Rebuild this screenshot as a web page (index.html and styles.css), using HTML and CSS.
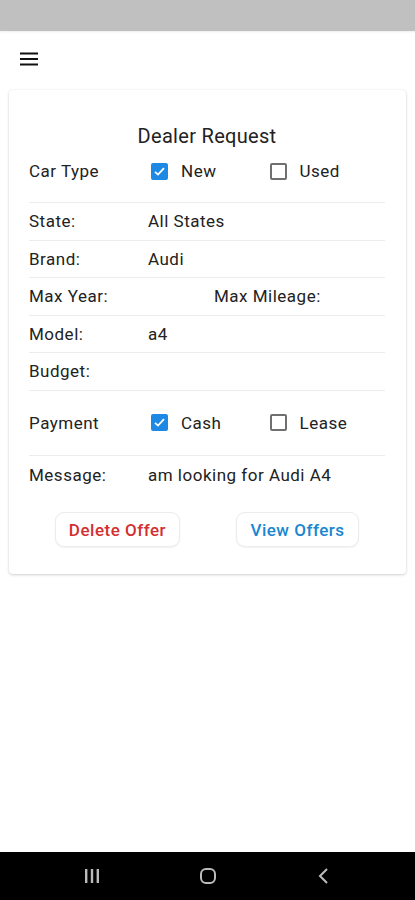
FILE: index.html
```html
<!DOCTYPE html>
<html lang="en">
<head>
    <meta charset="UTF-8">
    <meta name="viewport" content="width=device-width, initial-scale=1.0">
    <title>Dealer Request</title>
    <link rel="stylesheet" href="styles.css">
</head>
<body>

    <div class="status-bar"></div>

    <header class="app-bar">
        <svg class="menu-icon" width="18" height="14" viewBox="0 0 18 14">
            <rect x="0" y="0.5" width="18" height="2" fill="#111"/>
            <rect x="0" y="6" width="18" height="2" fill="#111"/>
            <rect x="0" y="11.5" width="18" height="2" fill="#111"/>
        </svg>
    </header>

    <div class="card">
        <h2 class="card-title">Dealer Request</h2>

        <div class="row row-first">
            <span class="label">Car Type</span>
            <span class="option">
                <span class="box checked"><svg width="13" height="13" viewBox="0 0 13 13"><path d="M2 6.8 L5 9.6 L11 3.2" fill="none" stroke="#fff" stroke-width="1.8"/></svg></span>
                New
            </span>
            <span class="option">
                <span class="box"></span>
                Used
            </span>
        </div>

        <div class="row">
            <span class="label">State:</span>
            <span class="value">All States</span>
        </div>

        <div class="row">
            <span class="label">Brand:</span>
            <span class="value">Audi</span>
        </div>

        <div class="row">
            <span class="half">Max Year:</span>
            <span class="value">Max Mileage:</span>
        </div>

        <div class="row">
            <span class="label">Model:</span>
            <span class="value">a4</span>
        </div>

        <div class="row">
            <span class="label">Budget:</span>
            <span class="value"></span>
        </div>

        <div class="row row-pay">
            <span class="label">Payment</span>
            <span class="option">
                <span class="box checked"><svg width="13" height="13" viewBox="0 0 13 13"><path d="M2 6.8 L5 9.6 L11 3.2" fill="none" stroke="#fff" stroke-width="1.8"/></svg></span>
                Cash
            </span>
            <span class="option">
                <span class="box"></span>
                Lease
            </span>
        </div>

        <div class="row row-last">
            <span class="label">Message:</span>
            <span class="value">am looking for Audi A4</span>
        </div>

        <div class="actions">
            <button class="btn btn-delete">Delete Offer</button>
            <button class="btn btn-view">View Offers</button>
        </div>
    </div>

    <nav class="nav-bar">
        <span class="nav-item">
            <svg width="16" height="16" viewBox="0 0 16 16">
                <rect x="1" y="1" width="2.4" height="14" fill="#bbb"/>
                <rect x="6.8" y="1" width="2.4" height="14" fill="#bbb"/>
                <rect x="12.6" y="1" width="2.4" height="14" fill="#bbb"/>
            </svg>
        </span>
        <span class="nav-item">
            <svg width="18" height="18" viewBox="0 0 18 18">
                <rect x="2" y="2" width="14" height="14" rx="5" fill="none" stroke="#bbb" stroke-width="2"/>
            </svg>
        </span>
        <span class="nav-item">
            <svg width="14" height="18" viewBox="0 0 14 18">
                <path d="M10 2 L3 9 L10 16" fill="none" stroke="#bbb" stroke-width="2"/>
            </svg>
        </span>
    </nav>

</body>
</html>
```

FILE: styles.css
```css
body {
    margin: 0;
    font-family: Roboto, "Noto Sans", sans-serif;
    color: #222;
    background: #fff;
    min-height: 900px;
    display: flex;
    flex-direction: column;
}

.status-bar {
    height: 31px;
    background: #c0c0c0;
    box-shadow: 0 1px 2px rgba(0, 0, 0, 0.08);
}

.app-bar {
    height: 56px;
    display: flex;
    align-items: center;
    padding-left: 20px;
}

.card {
    margin: 3px 9px 0;
    padding: 33px 21px 27px 20px;
    border-radius: 4px;
    box-shadow: 0 1px 3px rgba(0, 0, 0, 0.18), 0 0 2px rgba(0, 0, 0, 0.06);
}

.card-title {
    margin: 0;
    text-align: center;
    font-size: 20px;
    font-weight: 400;
    letter-spacing: 0.3px;
    line-height: 26px;
}

.row {
    display: flex;
    align-items: center;
    font-size: 17px;
    letter-spacing: 0.5px;
    line-height: 18px;
    padding: 9px 0 9.5px;
    border-bottom: 1px solid #ececec;
}

.row-first {
    padding: 13px 0 22px;
}

.row-pay {
    padding: 23px 0 23px;
}

.row-last {
    border-bottom: none;
    padding-top: 10px;
}

.label {
    width: 119px;
    flex-shrink: 0;
}

.half {
    width: 185px;
    flex-shrink: 0;
}

.option {
    width: 120px;
    display: flex;
    align-items: center;
}

.box {
    width: 17px;
    height: 17px;
    box-sizing: border-box;
    margin: 0 13px 0 3px;
    border: 2px solid #707070;
    border-radius: 2px;
    display: flex;
    align-items: center;
    justify-content: center;
}

.box.checked {
    background: #1e88e5;
    border-color: #1e88e5;
}

.actions {
    display: flex;
    justify-content: center;
    gap: 56px;
    margin-top: 19px;
}

.btn {
    font-family: Roboto, "Noto Sans", sans-serif;
    font-size: 17px;
    font-weight: 500;
    letter-spacing: 0.5px;
    height: 35px;
    padding: 0;
    background: #fff;
    border: 1px solid #ececec;
    border-radius: 9px;
    box-shadow: 0 1px 2px rgba(0, 0, 0, 0.06);
}

.btn-delete {
    color: #d32f2f;
    width: 125px;
}

.btn-view {
    color: #1a86d0;
    width: 123px;
}

.nav-bar {
    margin-top: auto;
    height: 48px;
    background: #000;
    display: flex;
    align-items: center;
    justify-content: center;
}

.nav-item {
    width: 116px;
    display: flex;
    justify-content: center;
}
```
